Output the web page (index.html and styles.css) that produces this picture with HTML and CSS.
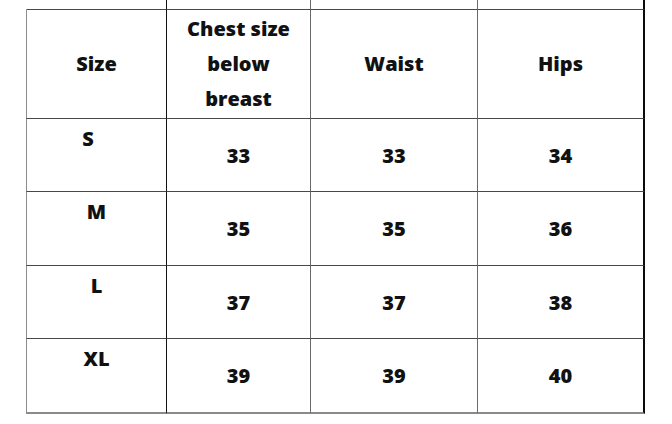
FILE: index.html
```html
<!DOCTYPE html>
<html>
<head>
<meta charset="utf-8">
<link rel="stylesheet" href="styles.css">
</head>
<body>
<div class="chart">
  <div class="cell stub first"></div>
  <div class="cell stub c2"></div>
  <div class="cell stub c3"></div>
  <div class="cell stub c4"></div>

  <div class="cell head first">Size</div>
  <div class="cell head c2">Chest size<br>below<br>breast</div>
  <div class="cell head c3">Waist</div>
  <div class="cell head c4">Hips</div>

  <div class="cell label first"><span class="s-label">S</span></div>
  <div class="cell num c2">33</div>
  <div class="cell num c3">33</div>
  <div class="cell num c4">34</div>

  <div class="cell label first">M</div>
  <div class="cell num c2">35</div>
  <div class="cell num c3">35</div>
  <div class="cell num c4">36</div>

  <div class="cell label first">L</div>
  <div class="cell num c2">37</div>
  <div class="cell num c3">37</div>
  <div class="cell num c4">38</div>

  <div class="cell label first last">XL</div>
  <div class="cell num c2 last">39</div>
  <div class="cell num c3 last">39</div>
  <div class="cell num c4 last">40</div>
</div>
</body>
</html>
```

FILE: styles.css
```css
html, body {
  margin: 0;
  padding: 0;
  background: #ffffff;
}

.chart {
  margin-left: 26px;
  width: 619px;
  display: grid;
  grid-template-columns: 141px 144px 167px 167px;
  grid-template-rows: 10px 109px 73px 74px 73px 75px;
  font-family: "Open Sans", "DejaVu Sans", sans-serif;
  font-weight: 800;
  font-size: 20px;
  color: #111111;
  line-height: 35px;
}

.cell {
  box-sizing: border-box;
  border-bottom: 1px solid #484848;
  text-align: center;
}

.first {
  border-left: 1px solid #8c8c8c;
  border-right: 1px solid #111111;
}

.c2 {
  border-right: 1px solid #6a6a6a;
}

.c3 {
  border-right: 1px solid #6a6a6a;
}

.c4 {
  border-right: 2px solid #0a0a0a;
}

.stub.first {
  border-left: 1px solid transparent;
}

.head {
  display: flex;
  align-items: center;
  justify-content: center;
  padding-bottom: 2px;
}

.num {
  display: flex;
  align-items: center;
  justify-content: center;
}

.label {
  padding-top: 2px;
}

.s-label {
  display: inline-block;
  padding-right: 17px;
  margin-top: -2px;
}

.last {
  border-bottom: 2px solid #8a8a8a;
}
```
